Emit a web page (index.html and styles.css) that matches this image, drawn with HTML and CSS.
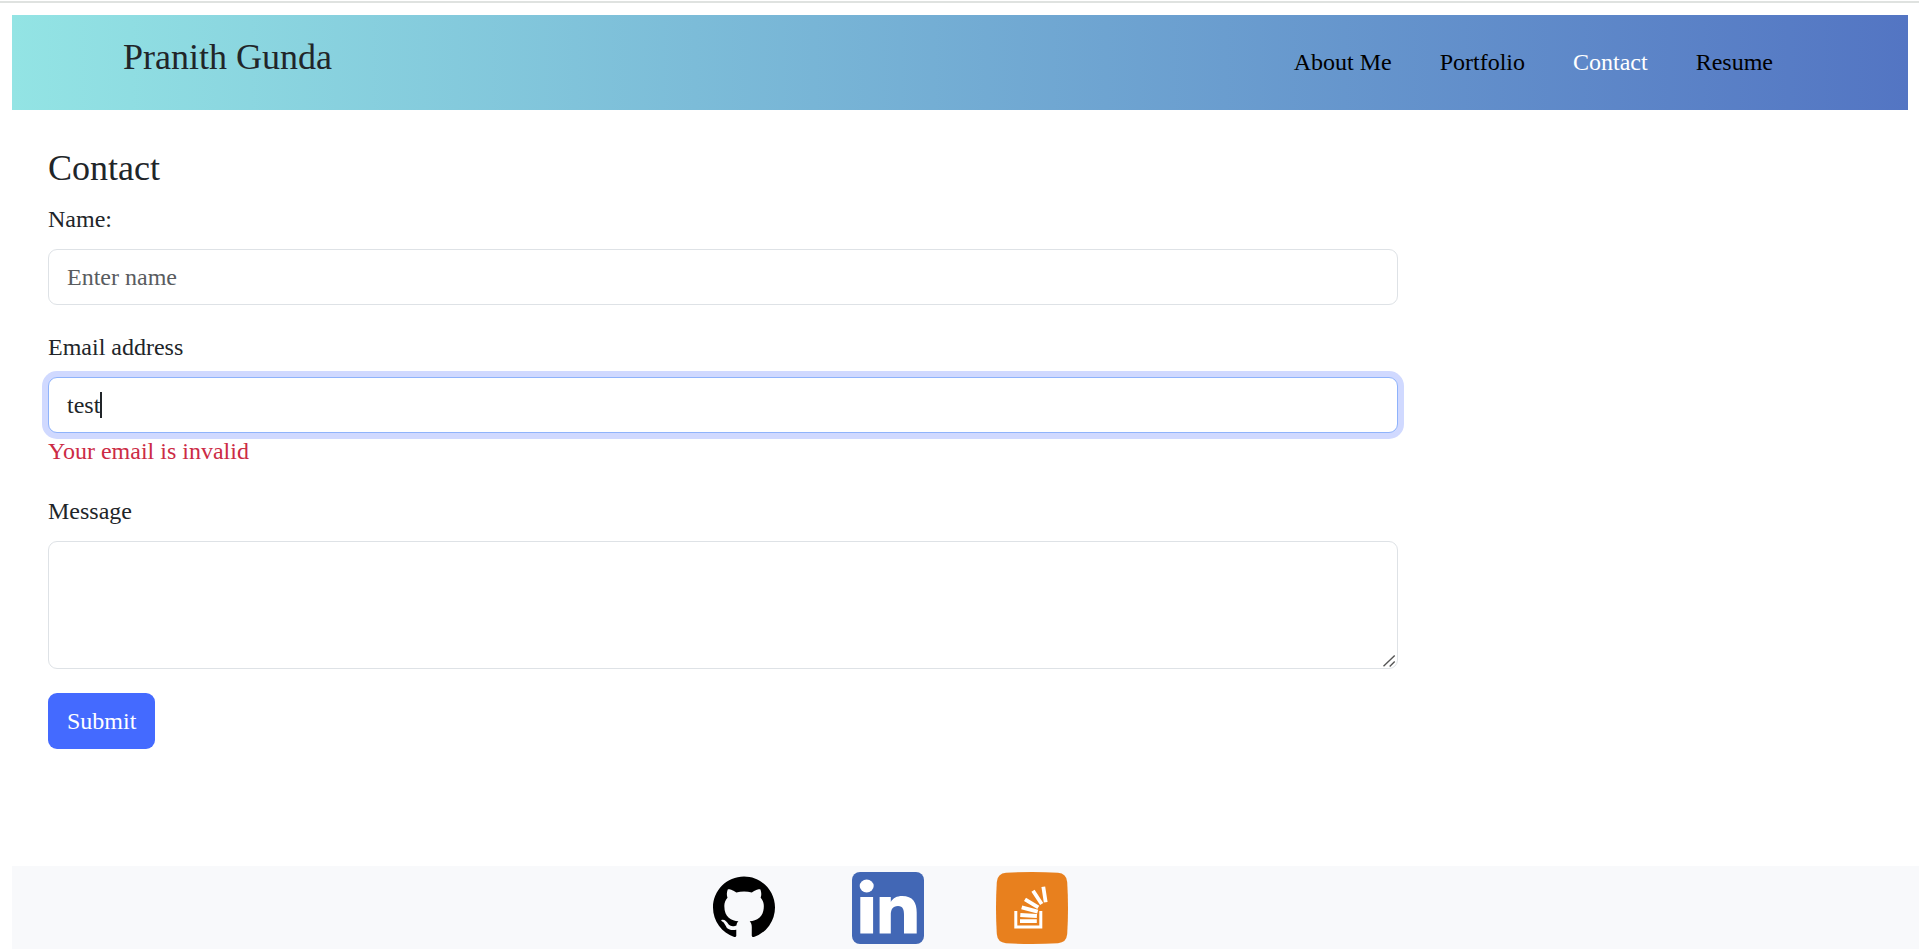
FILE: index.html
```html
<!DOCTYPE html>
<html lang="en">
<head>
<meta charset="utf-8">
<title>Pranith Gunda</title>
<link rel="stylesheet" href="styles.css">
</head>
<body>
<div class="top-rule"></div>
<header class="header">
  <h2 class="brand">Pranith Gunda</h2>
  <nav class="nav">
    <a class="nav-link">About Me</a>
    <a class="nav-link">Portfolio</a>
    <a class="nav-link active">Contact</a>
    <a class="nav-link">Resume</a>
  </nav>
</header>
<main class="main">
  <h2 class="title">Contact</h2>
  <form class="form">
    <div class="group">
      <label class="label">Name:</label>
      <input class="control" type="text" placeholder="Enter name">
    </div>
    <div class="group">
      <label class="label">Email address</label>
      <div class="control focused"><span>test</span><span class="caret"></span></div>
      <div class="error">Your email is invalid</div>
    </div>
    <div class="group message">
      <label class="label">Message</label>
      <textarea class="control area" rows="3"></textarea>
      <svg class="grip" viewBox="0 0 14 14"><path d="M1.500 12.200L12.700 1.500M7.700 12.400L12.700 7.600" stroke="#555" stroke-width="1.400"/></svg>
    </div>
    <button class="submit" type="button">Submit</button>
  </form>
</main>
<footer class="footer">
  <svg class="icon" viewBox="0 0 72 72"><g transform="translate(5 4.600) scale(3.875)"><path d="M8 0C3.58 0 0 3.58 0 8c0 3.54 2.29 6.53 5.47 7.59.4.07.55-.17.55-.38 0-.19-.01-.82-.01-1.49-2.01.37-2.53-.49-2.69-.94-.09-.23-.48-.94-.82-1.13-.28-.15-.68-.52-.01-.53.63-.01 1.08.58 1.23.82.72 1.21 1.87.87 2.33.66.07-.52.28-.87.51-1.07-1.78-.2-3.64-.89-3.64-3.95 0-.87.31-1.59.82-2.15-.08-.2-.36-1.02.08-2.12 0 0 .67-.21 2.2.82.64-.18 1.32-.27 2-.27s1.36.09 2 .27c1.53-1.04 2.2-.82 2.2-.82.44 1.1.16 1.92.08 2.12.51.56.82 1.27.82 2.15 0 3.07-1.87 3.75-3.65 3.95.29.25.54.73.54 1.48 0 1.07-.01 1.93-.01 2.2 0 .21.15.46.55.38A8.01 8.01 0 0 0 16 8c0-4.42-3.58-8-8-8z"/></g></svg>
  <svg class="icon" viewBox="0 0 72 72"><rect width="72" height="72" rx="8" fill="#4267b5"/><g fill="#fff"><ellipse cx="14.7" cy="14" rx="7" ry="6.4"/><path d="M8.3 25h12.8v36.5H8.3zM27.6 25h11.2v5c2.200-4 6.200-6 11.200-6 11 0 14.700 6.500 14.700 16.500v21H52V43c0-5-.8-9-6-9-5.500 0-7.200 3.800-7.200 9v18.500H27.600z"/></g></svg>
  <svg class="icon" viewBox="0 0 72 72"><path d="M10 .8Q36-.8 62 .8Q70.500 1.500 71.200 10Q72.800 36 71.200 62Q70.500 70.500 62 71.200Q36 72.800 10 71.200Q1.500 70.500.8 62Q-.8 36 .8 10Q1.500 1.500 10 .8z" fill="#e8801e"/><g fill="none" stroke="#fff" stroke-width="3.800"><path stroke-width="3" d="M19.800 39v16h25V39"/><path d="M24 49.200h16.800M24.300 43l16.600 1M25.700 35.300l16 4.400M29 27.300l13.300 8M37 18.700L45.700 32M47.300 14.700l2.400 15.600"/></g></svg>
</footer>
</body>
</html>
```
FILE: styles.css
```css
* { box-sizing: border-box; }
body {
  margin: 0;
  height: 949px;
  display: flex;
  flex-direction: column;
  overflow: hidden;
  background: #fff;
  color: #212529;
  font: 24px/36px "Liberation Serif", "Times New Roman", serif;
}
h2 { margin: 0; font-size: 36px; line-height: 43px; font-weight: 400; }
.top-rule { height: 2px; margin: 1px 0 12px; background: #dfe2e0; }
.header {
  height: 95px;
  margin: 0 11px 0 12px;
  padding: 21px 135px 0 111px;
  display: flex;
  justify-content: space-between;
  background: linear-gradient(to right, #93e4e4, #5375c3);
}
.nav { display: flex; gap: 48px; padding-top: 8px; }
.nav-link { color: #000; }
.nav-link.active { color: #fff; }
.main { padding: 37px 48px 0; flex: 1; }
.title { margin-bottom: 11px; }
.form { width: 1350px; }
.group { margin-bottom: 24px; }
.label { display: block; margin-bottom: 12px; }
.control {
  display: block;
  width: 100%;
  height: 56px;
  margin: 0;
  padding: 9px 18px;
  border: 1px solid #dee2e6;
  border-radius: 9px;
  background: #fff;
  color: #212529;
  font: inherit;
}
.control::placeholder { color: #595c5f; opacity: 1; }
.focused {
  display: flex;
  align-items: center;
  border-color: #8fb3fb;
  box-shadow: 0 0 0 6px #d0d9ff;
}
.caret { width: 2px; height: 26px; background: #212529; }
.error { color: #cc2b45; }
.message { position: relative; }
.area { height: 128px; resize: none; }
/* resize handle over the textarea corner */
.grip { position: absolute; right: 2px; bottom: 1px; width: 14px; height: 14px; }
.submit {
  display: block;
  height: 56px;
  padding: 9px 19px;
  border: 0;
  border-radius: 9px;
  background: #446aff;
  color: #fff;
  font: inherit;
  line-height: 36px;
}
.footer {
  height: 83px;
  margin-left: 12px;
  padding: 6px 0 0 696px;
  display: flex;
  gap: 72px;
  background: #f8f9fb;
}
.icon { width: 72px; height: 72px; }
```
